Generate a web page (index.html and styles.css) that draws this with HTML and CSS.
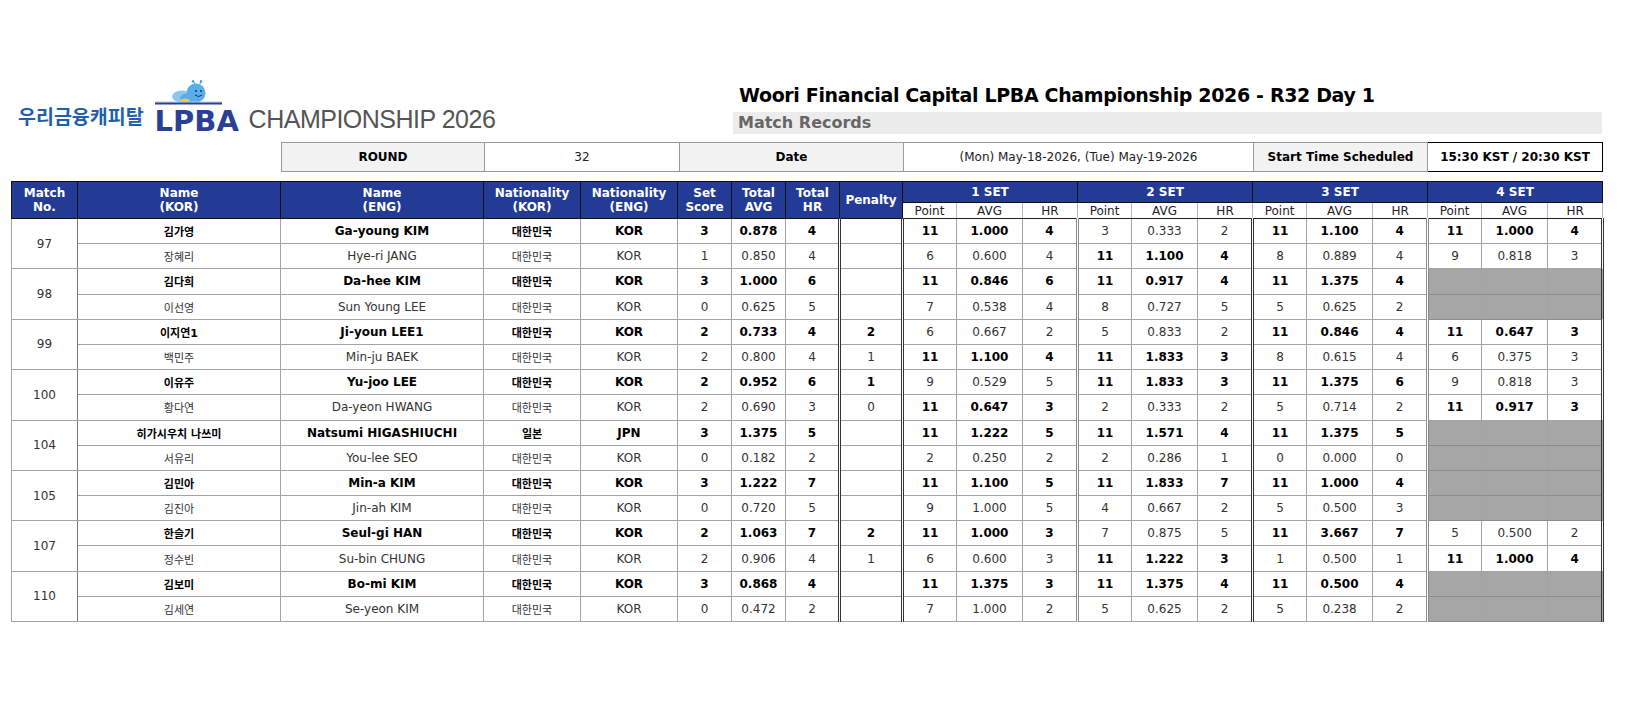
FILE: index.html
```html
<!DOCTYPE html>
<html lang="ko">
<head>
<meta charset="utf-8">
<title>Match Records</title>
<link rel="stylesheet" href="styles.css">
</head>
<body>
<div class="page">
  <div class="top">
    <div class="logo">
      <span class="brand-kr">우리금융캐피탈</span>
      <div class="lpba">
        <svg class="mascot" width="85" height="26" viewBox="0 0 85 26">
          <line x1="40" y1="4" x2="38" y2="1" stroke="#4a9fe0" stroke-width="1.2"/>
          <line x1="45" y1="4" x2="46" y2="1" stroke="#4a9fe0" stroke-width="1.2"/>
          <circle cx="38" cy="1.2" r="1.2" fill="#4a9fe0"/>
          <circle cx="46" cy="1.2" r="1.2" fill="#4a9fe0"/>
          <ellipse cx="27" cy="16.5" rx="10" ry="6" fill="#8cc8f0"/>
          <circle cx="41" cy="13" r="9.5" fill="#58aee8"/>
          <ellipse cx="33" cy="18" rx="8" ry="4.5" fill="#58aee8"/>
          <circle cx="41" cy="11" r="1" fill="#1d2f6b"/>
          <circle cx="46" cy="11" r="1" fill="#1d2f6b"/>
          <path d="M40 15 Q43.5 18 47 15" stroke="#1d2f6b" stroke-width="1" fill="none"/>
          <ellipse cx="30" cy="20.5" rx="4.5" ry="2" fill="#e9c55a"/>
          <rect x="0" y="21.5" width="67" height="1" fill="#a9cdee"/>
          <rect x="0" y="22.5" width="67" height="2" fill="#2d3f8f"/>
        </svg>
        <div class="lpba-text">LPBA</div>
      </div>
      <span class="champ">CHAMPIONSHIP 2026</span>
    </div>
    <div class="heading">
      <div class="title">Woori Financial Capital LPBA Championship 2026 - R32 Day 1</div>
      <div class="subtitle">Match Records</div>
    </div>
  </div>

  <table class="info">
    <colgroup>
      <col class="i1"><col class="i2"><col class="i3"><col class="i4"><col class="i5"><col class="i6">
    </colgroup>
    <tr>
      <td class="lab">ROUND</td>
      <td>32</td>
      <td class="lab">Date</td>
      <td>(Mon) May-18-2026, (Tue) May-19-2026</td>
      <td class="lab">Start Time Scheduled</td>
      <td class="time">15:30 KST / 20:30 KST</td>
    </tr>
  </table>

  <table class="grid">
    <colgroup>
      <col class="c-no"><col class="c-name"><col class="c-name"><col class="c-nat"><col class="c-nat">
      <col class="c-sm"><col class="c-sm"><col class="c-sm"><col class="c-pen">
      <col class="c-pt"><col class="c-avg"><col class="c-hr">
      <col class="c-pt"><col class="c-avg"><col class="c-hr">
      <col class="c-pt"><col class="c-avg"><col class="c-hr">
      <col class="c-pt"><col class="c-avg"><col class="c-hr">
    </colgroup>
    <thead>
      <tr class="h1">
        <th rowspan="2">Match<br>No.</th>
        <th rowspan="2">Name<br>(KOR)</th>
        <th rowspan="2">Name<br>(ENG)</th>
        <th rowspan="2">Nationality<br>(KOR)</th>
        <th rowspan="2">Nationality<br>(ENG)</th>
        <th rowspan="2">Set<br>Score</th>
        <th rowspan="2">Total<br>AVG</th>
        <th rowspan="2">Total<br>HR</th>
        <th rowspan="2">Penalty</th>
        <th colspan="3">1 SET</th>
        <th colspan="3">2 SET</th>
        <th colspan="3">3 SET</th>
        <th colspan="3">4 SET</th>
      </tr>
      <tr class="h2">
        <td>Point</td><td>AVG</td><td>HR</td>
        <td>Point</td><td>AVG</td><td>HR</td>
        <td>Point</td><td>AVG</td><td>HR</td>
        <td>Point</td><td>AVG</td><td>HR</td>
      </tr>
    </thead>
    <tbody>
      <tr class="win first">
        <td rowspan="2" class="no">97</td>
        <td class="k">김가영</td><td>Ga-young KIM</td><td class="k">대한민국</td><td>KOR</td><td>3</td><td>0.878</td><td>4</td><td class="pen"></td>
        <td class="s1 b">11</td><td class="b">1.000</td><td class="b">4</td>
        <td class="s2">3</td><td>0.333</td><td>2</td>
        <td class="s1 b">11</td><td class="b">1.100</td><td class="b">4</td>
        <td class="s2 b">11</td><td class="b">1.000</td><td class="e b">4</td>
      </tr>
      <tr>
        <td class="k">장혜리</td><td>Hye-ri JANG</td><td class="k">대한민국</td><td>KOR</td><td>1</td><td>0.850</td><td>4</td><td class="pen"></td>
        <td class="s1">6</td><td>0.600</td><td>4</td>
        <td class="s2 b">11</td><td class="b">1.100</td><td class="b">4</td>
        <td class="s1">8</td><td>0.889</td><td>4</td>
        <td class="s2">9</td><td>0.818</td><td class="e">3</td>
      </tr>

      <tr class="win first">
        <td rowspan="2" class="no">98</td>
        <td class="k">김다희</td><td>Da-hee KIM</td><td class="k">대한민국</td><td>KOR</td><td>3</td><td>1.000</td><td>6</td><td class="pen"></td>
        <td class="s1 b">11</td><td class="b">0.846</td><td class="b">6</td>
        <td class="s2 b">11</td><td class="b">0.917</td><td class="b">4</td>
        <td class="s1 b">11</td><td class="b">1.375</td><td class="b">4</td>
        <td class="s2 g"></td><td class="g"></td><td class="e g"></td>
      </tr>
      <tr>
        <td class="k">이선영</td><td>Sun Young LEE</td><td class="k">대한민국</td><td>KOR</td><td>0</td><td>0.625</td><td>5</td><td class="pen"></td>
        <td class="s1">7</td><td>0.538</td><td>4</td>
        <td class="s2">8</td><td>0.727</td><td>5</td>
        <td class="s1">5</td><td>0.625</td><td>2</td>
        <td class="s2 g"></td><td class="g"></td><td class="e g"></td>
      </tr>

      <tr class="win first">
        <td rowspan="2" class="no">99</td>
        <td class="k">이지연1</td><td>Ji-youn LEE1</td><td class="k">대한민국</td><td>KOR</td><td>2</td><td>0.733</td><td>4</td><td class="pen">2</td>
        <td class="s1">6</td><td>0.667</td><td>2</td>
        <td class="s2">5</td><td>0.833</td><td>2</td>
        <td class="s1 b">11</td><td class="b">0.846</td><td class="b">4</td>
        <td class="s2 b">11</td><td class="b">0.647</td><td class="e b">3</td>
      </tr>
      <tr>
        <td class="k">백민주</td><td>Min-ju BAEK</td><td class="k">대한민국</td><td>KOR</td><td>2</td><td>0.800</td><td>4</td><td class="pen">1</td>
        <td class="s1 b">11</td><td class="b">1.100</td><td class="b">4</td>
        <td class="s2 b">11</td><td class="b">1.833</td><td class="b">3</td>
        <td class="s1">8</td><td>0.615</td><td>4</td>
        <td class="s2">6</td><td>0.375</td><td class="e">3</td>
      </tr>

      <tr class="win first">
        <td rowspan="2" class="no">100</td>
        <td class="k">이유주</td><td>Yu-joo LEE</td><td class="k">대한민국</td><td>KOR</td><td>2</td><td>0.952</td><td>6</td><td class="pen">1</td>
        <td class="s1">9</td><td>0.529</td><td>5</td>
        <td class="s2 b">11</td><td class="b">1.833</td><td class="b">3</td>
        <td class="s1 b">11</td><td class="b">1.375</td><td class="b">6</td>
        <td class="s2">9</td><td>0.818</td><td class="e">3</td>
      </tr>
      <tr>
        <td class="k">황다연</td><td>Da-yeon HWANG</td><td class="k">대한민국</td><td>KOR</td><td>2</td><td>0.690</td><td>3</td><td class="pen">0</td>
        <td class="s1 b">11</td><td class="b">0.647</td><td class="b">3</td>
        <td class="s2">2</td><td>0.333</td><td>2</td>
        <td class="s1">5</td><td>0.714</td><td>2</td>
        <td class="s2 b">11</td><td class="b">0.917</td><td class="e b">3</td>
      </tr>

      <tr class="win first">
        <td rowspan="2" class="no">104</td>
        <td class="k">히가시우치 나쓰미</td><td>Natsumi HIGASHIUCHI</td><td class="k">일본</td><td>JPN</td><td>3</td><td>1.375</td><td>5</td><td class="pen"></td>
        <td class="s1 b">11</td><td class="b">1.222</td><td class="b">5</td>
        <td class="s2 b">11</td><td class="b">1.571</td><td class="b">4</td>
        <td class="s1 b">11</td><td class="b">1.375</td><td class="b">5</td>
        <td class="s2 g"></td><td class="g"></td><td class="e g"></td>
      </tr>
      <tr>
        <td class="k">서유리</td><td>You-lee SEO</td><td class="k">대한민국</td><td>KOR</td><td>0</td><td>0.182</td><td>2</td><td class="pen"></td>
        <td class="s1">2</td><td>0.250</td><td>2</td>
        <td class="s2">2</td><td>0.286</td><td>1</td>
        <td class="s1">0</td><td>0.000</td><td>0</td>
        <td class="s2 g"></td><td class="g"></td><td class="e g"></td>
      </tr>

      <tr class="win first">
        <td rowspan="2" class="no">105</td>
        <td class="k">김민아</td><td>Min-a KIM</td><td class="k">대한민국</td><td>KOR</td><td>3</td><td>1.222</td><td>7</td><td class="pen"></td>
        <td class="s1 b">11</td><td class="b">1.100</td><td class="b">5</td>
        <td class="s2 b">11</td><td class="b">1.833</td><td class="b">7</td>
        <td class="s1 b">11</td><td class="b">1.000</td><td class="b">4</td>
        <td class="s2 g"></td><td class="g"></td><td class="e g"></td>
      </tr>
      <tr>
        <td class="k">김진아</td><td>Jin-ah KIM</td><td class="k">대한민국</td><td>KOR</td><td>0</td><td>0.720</td><td>5</td><td class="pen"></td>
        <td class="s1">9</td><td>1.000</td><td>5</td>
        <td class="s2">4</td><td>0.667</td><td>2</td>
        <td class="s1">5</td><td>0.500</td><td>3</td>
        <td class="s2 g"></td><td class="g"></td><td class="e g"></td>
      </tr>

      <tr class="win first">
        <td rowspan="2" class="no">107</td>
        <td class="k">한슬기</td><td>Seul-gi HAN</td><td class="k">대한민국</td><td>KOR</td><td>2</td><td>1.063</td><td>7</td><td class="pen">2</td>
        <td class="s1 b">11</td><td class="b">1.000</td><td class="b">3</td>
        <td class="s2">7</td><td>0.875</td><td>5</td>
        <td class="s1 b">11</td><td class="b">3.667</td><td class="b">7</td>
        <td class="s2">5</td><td>0.500</td><td class="e">2</td>
      </tr>
      <tr>
        <td class="k">정수빈</td><td>Su-bin CHUNG</td><td class="k">대한민국</td><td>KOR</td><td>2</td><td>0.906</td><td>4</td><td class="pen">1</td>
        <td class="s1">6</td><td>0.600</td><td>3</td>
        <td class="s2 b">11</td><td class="b">1.222</td><td class="b">3</td>
        <td class="s1">1</td><td>0.500</td><td>1</td>
        <td class="s2 b">11</td><td class="b">1.000</td><td class="e b">4</td>
      </tr>

      <tr class="win first">
        <td rowspan="2" class="no">110</td>
        <td class="k">김보미</td><td>Bo-mi KIM</td><td class="k">대한민국</td><td>KOR</td><td>3</td><td>0.868</td><td>4</td><td class="pen"></td>
        <td class="s1 b">11</td><td class="b">1.375</td><td class="b">3</td>
        <td class="s2 b">11</td><td class="b">1.375</td><td class="b">4</td>
        <td class="s1 b">11</td><td class="b">0.500</td><td class="b">4</td>
        <td class="s2 g"></td><td class="g"></td><td class="e g"></td>
      </tr>
      <tr>
        <td class="k">김세연</td><td>Se-yeon KIM</td><td class="k">대한민국</td><td>KOR</td><td>0</td><td>0.472</td><td>2</td><td class="pen"></td>
        <td class="s1">7</td><td>1.000</td><td>2</td>
        <td class="s2">5</td><td>0.625</td><td>2</td>
        <td class="s1">5</td><td>0.238</td><td>2</td>
        <td class="s2 g"></td><td class="g"></td><td class="e g"></td>
      </tr>
    </tbody>
  </table>
</div>
</body>
</html>
```

FILE: styles.css
```css
html, body {
  margin: 0;
  padding: 0;
  background: #ffffff;
}

body {
  font-family: "DejaVu Sans", "Noto Sans CJK KR", sans-serif;
  font-size: 12px;
  color: #000;
}

.page {
  padding-left: 11px;
  width: 1591px;
}

/* ---------- top header ---------- */
.top {
  display: flex;
  height: 142px;
}

.logo {
  width: 715px;
  padding-left: 7px;
  padding-top: 78px;
  display: flex;
  align-items: flex-start;
  box-sizing: content-box;
}

.brand-kr {
  margin-top: 28px;
  font-family: "Noto Sans CJK KR", sans-serif;
  font-weight: 700;
  font-size: 19.5px;
  line-height: 19px;
  color: #1f5fae;
  white-space: nowrap;
}

.lpba {
  margin-left: 11px;
  margin-top: 2px;
  width: 85px;
}

.mascot {
  display: block;
}

.lpba-text {
  margin-top: 4px;
  font-family: "DejaVu Sans", sans-serif;
  font-weight: 700;
  font-size: 29px;
  line-height: 22px;
  color: #2b3f96;
  white-space: nowrap;
}

.champ {
  margin-left: 9px;
  margin-top: 29px;
  font-family: "Liberation Sans", sans-serif;
  font-size: 25px;
  line-height: 25px;
  letter-spacing: -0.5px;
  color: #555555;
  white-space: nowrap;
}

.heading {
  width: 869px;
}

.title {
  margin-top: 83px;
  padding-left: 6px;
  font-weight: 700;
  font-size: 19px;
  line-height: 24px;
  letter-spacing: -0.35px;
  color: #000;
  white-space: nowrap;
}

.subtitle {
  margin-top: 5px;
  height: 22px;
  padding-left: 5px;
  background: #ececec;
  font-weight: 700;
  font-size: 16px;
  line-height: 22px;
  color: #666666;
}

/* ---------- info row ---------- */
.info {
  margin-left: 270px;
  border-collapse: collapse;
  table-layout: fixed;
  width: 1321px;
}

.info .i1 { width: 203px; }
.info .i2 { width: 195px; }
.info .i3 { width: 224px; }
.info .i4 { width: 350px; }
.info .i5 { width: 174px; }
.info .i6 { width: 175px; }

.info td {
  height: 28px;
  padding: 0;
  border: 1px solid #9a9a9a;
  text-align: center;
  font-size: 12px;
  color: #222;
}

.info td.lab {
  background: #f2f2f2;
  font-weight: 700;
  color: #000;
}

.info td.time {
  border: 1px solid #000;
  font-weight: 700;
  color: #000;
}

/* ---------- main grid ---------- */
.grid {
  margin-top: 9px;
  border-collapse: collapse;
  table-layout: fixed;
  width: 1591px;
  border: 1px solid #555;
}

.c-no { width: 66px; }
.c-name { width: 203px; }
.c-nat { width: 97px; }
.c-sm { width: 54px; }
.c-pen { width: 63px; }
.c-pt { width: 54px; }
.c-avg { width: 66px; }
.c-hr { width: 55px; }

.grid th {
  background: #233b95;
  color: #fff;
  font-weight: 700;
  font-size: 12px;
  line-height: 14px;
  border: 1px solid #111;
  padding: 0;
  text-align: center;
}

.grid .h1 th {
  height: 20px;
}

.grid .h2 td {
  height: 15px;
  padding: 0;
  background: #fff;
  font-size: 12px;
  line-height: 14px;
  color: #222;
  border: 1px solid #b5b5b5;
  border-top: 1px solid #111;
  border-bottom: 1px solid #222;
  text-align: center;
}

.grid tbody td {
  height: 24.2px;
  padding: 0;
  border: 1px solid #a3a3a3;
  text-align: center;
  font-size: 12px;
  font-weight: 400;
  color: #333;
  white-space: nowrap;
}

/* winner row: player columns (name … penalty) are bold */
.grid tbody tr.win td:nth-child(n+2):nth-child(-n+9) {
  font-weight: 700;
  color: #000;
}

/* set winner cells */
.grid tbody td.b {
  font-weight: 700;
  color: #000;
}

.grid tbody td.no {
  border-right: 1px solid #777;
}

.grid tbody tr.first td {
  border-top: 1px solid #8a8a8a;
}

.grid tbody td.k {
  font-size: 11px;
}

.grid tbody td.pen {
  border-left: 3px double #333;
}

.grid tbody td.s1 {
  border-left: 3px double #333;
}

.grid tbody td.s2 {
  border-left: 3px double #8a8a8a;
}

.grid tbody td.e {
  border-right: 3px double #333;
}

.grid tbody td.g {
  background: #a6a6a6;
  border-top-color: #8c8c8c;
  border-bottom-color: #8c8c8c;
}
```
